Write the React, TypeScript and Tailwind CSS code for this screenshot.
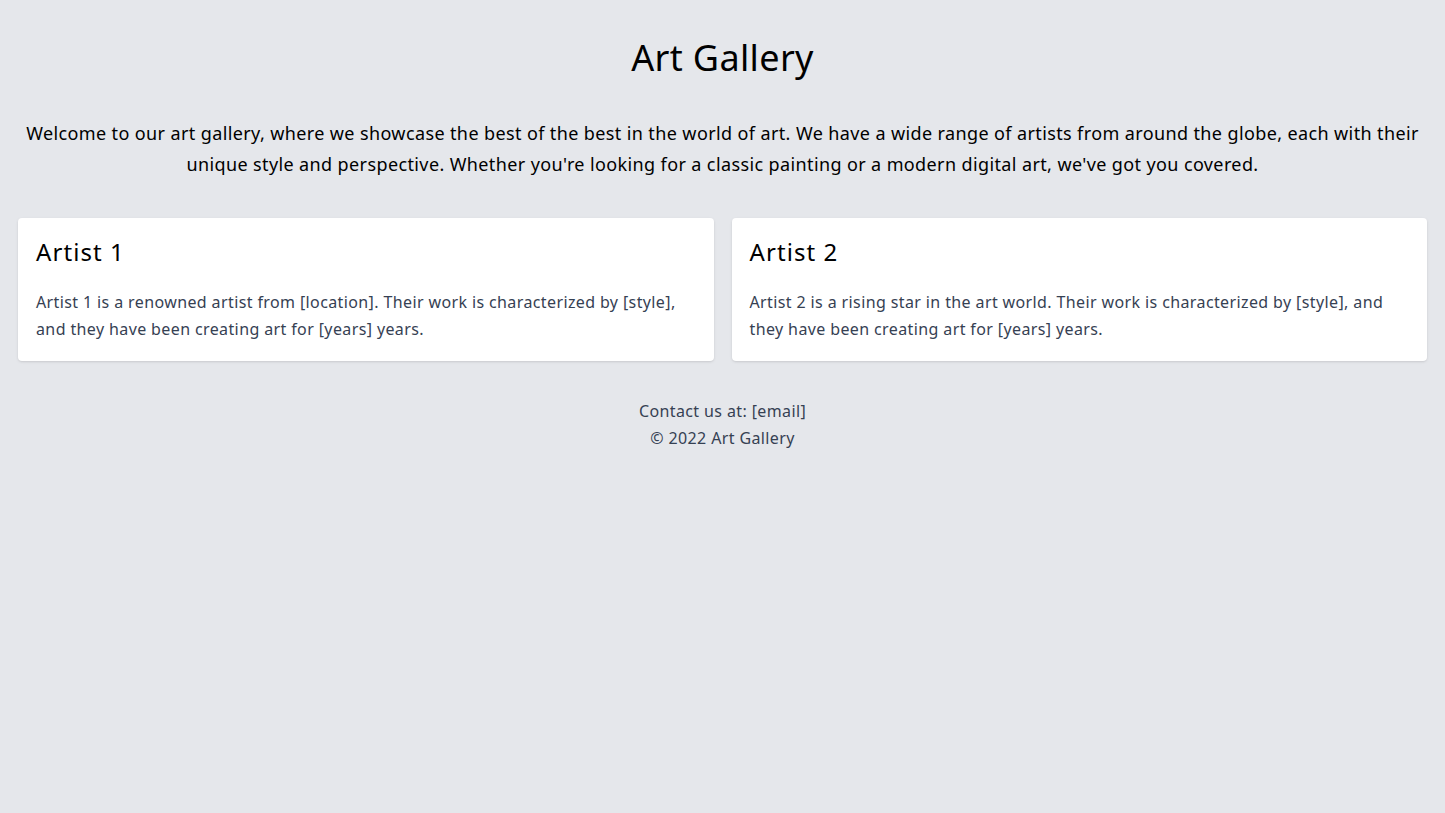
export default function App() {
  const artists = [
    {
      name: "Artist 1",
      bio: "Artist 1 is a renowned artist from [location]. Their work is characterized by [style], and they have been creating art for [years] years.",
    },
    {
      name: "Artist 2",
      bio: "Artist 2 is a rising star in the art world. Their work is characterized by [style], and they have been creating art for [years] years.",
    },
  ];

  return (
    <div className="min-h-screen bg-gray-200 px-[18px] pt-[34px] font-['Noto_Sans',sans-serif] tracking-[0.024em]">
      <h1 className="text-center text-4xl leading-[48px] tracking-[0.01em] text-black">Art Gallery</h1>

      <p className="mt-[36px] text-center text-lg leading-[31px] text-black">
        Welcome to our art gallery, where we showcase the best of the best in the world of art. We have a wide range of
        artists from around the globe, each with their unique style and perspective. Whether you're looking for a classic
        painting or a modern digital art, we've got you covered.
      </p>

      <div className="mt-[38px] grid grid-cols-2 gap-[18px]">
        {artists.map((a) => (
          <div key={a.name} className="rounded bg-white p-[18px] shadow">
            <h2 className="text-2xl leading-8 tracking-[0.045em] text-black">{a.name}</h2>
            <p className="mt-[21px] text-base leading-[27px] text-gray-700">{a.bio}</p>
          </div>
        ))}
      </div>

      <footer className="mt-[37px] text-center text-base leading-[27px] text-gray-700">
        <p>Contact us at: [email]</p>
        <p>© 2022 Art Gallery</p>
      </footer>
    </div>
  );
}
